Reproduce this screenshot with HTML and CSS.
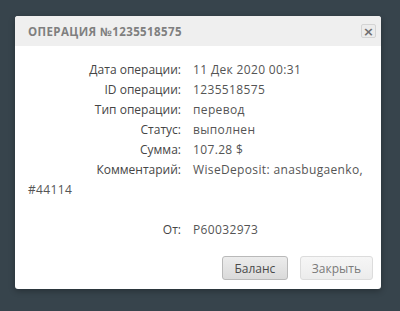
FILE: index.html
```html
<!DOCTYPE html>
<html lang="ru">
<head>
    <meta charset="UTF-8">
    <title>Операция</title>
    <link rel="stylesheet" href="styles.css">
</head>
<body>
    <div class="modal">
        <div class="modal-header">
            <h2>Операция №1235518575</h2>
            <button class="close-btn">&times;</button>
        </div>
        <div class="modal-body">
            <div class="row"><span class="label">Дата операции:</span>11 Дек 2020 00:31</div>
            <div class="row"><span class="label">ID операции:</span>1235518575</div>
            <div class="row"><span class="label">Тип операции:</span>перевод</div>
            <div class="row"><span class="label">Статус:</span>выполнен</div>
            <div class="row"><span class="label">Сумма:</span>107.28 $</div>
            <div class="row"><span class="label">Комментарий:</span>WiseDeposit: anasbugaenko,<br>#44114</div>
            <div class="row empty"></div>
            <div class="row"><span class="label">От:</span>P60032973</div>
            <div class="actions">
                <button class="btn btn-dark">Баланс</button>
                <button class="btn">Закрыть</button>
            </div>
        </div>
    </div>
</body>
</html>
```

FILE: styles.css
```css
* {
    margin: 0;
    padding: 0;
    box-sizing: border-box;
}

body {
    background: #37444c;
    font-family: 'Open Sans', 'Liberation Sans', sans-serif;
    color: #454545;
    height: 311px;
    overflow: hidden;
    padding: 16px 19px 0 15px;
}

.modal {
    background: #fff;
    border-radius: 3px;
    box-shadow: 0 2px 6px rgba(0, 0, 0, 0.3);
    overflow: hidden;
}

.modal-header {
    background: #efefef;
    height: 30px;
    display: flex;
    align-items: center;
    justify-content: space-between;
    padding: 0 5px 0 13px;
}

.modal-header h2 {
    font-size: 11.5px;
    font-weight: bold;
    text-transform: uppercase;
    letter-spacing: 0.4px;
    color: #7f7f7f;
}

.close-btn {
    width: 15px;
    height: 14px;
    border: 1px solid #d4d4d4;
    border-radius: 2px;
    background: #ececec;
    color: #6f6f6f;
    font-size: 13px;
    font-weight: bold;
    line-height: 11px;
    font-family: 'DejaVu Sans', sans-serif;
}

.modal-body {
    padding: 14px 13px 9px 13px;
    font-size: 12px;
    line-height: 20px;
}

.row {
    color: #555;
    letter-spacing: 0.35px;
}

.row.empty {
    height: 20px;
}

.label {
    display: inline-block;
    width: 153px;
    text-align: right;
    margin-right: 12px;
    color: #454545;
    letter-spacing: 0;
}

.actions {
    display: flex;
    justify-content: flex-end;
    gap: 12px;
    padding-top: 16px;
    margin-right: -5px;
}

.btn {
    height: 24px;
    padding: 0 11px;
    border: 1px solid #dcdcdc;
    border-radius: 3px;
    background: linear-gradient(#f6f6f6, #ececec);
    font-family: inherit;
    font-size: 12px;
    color: #7a7a7a;
}

.btn-dark {
    border-color: #b9b9b9;
    background: linear-gradient(#ececec, #dadada);
    color: #4a4a4a;
    padding: 0 11.5px;
}
```
